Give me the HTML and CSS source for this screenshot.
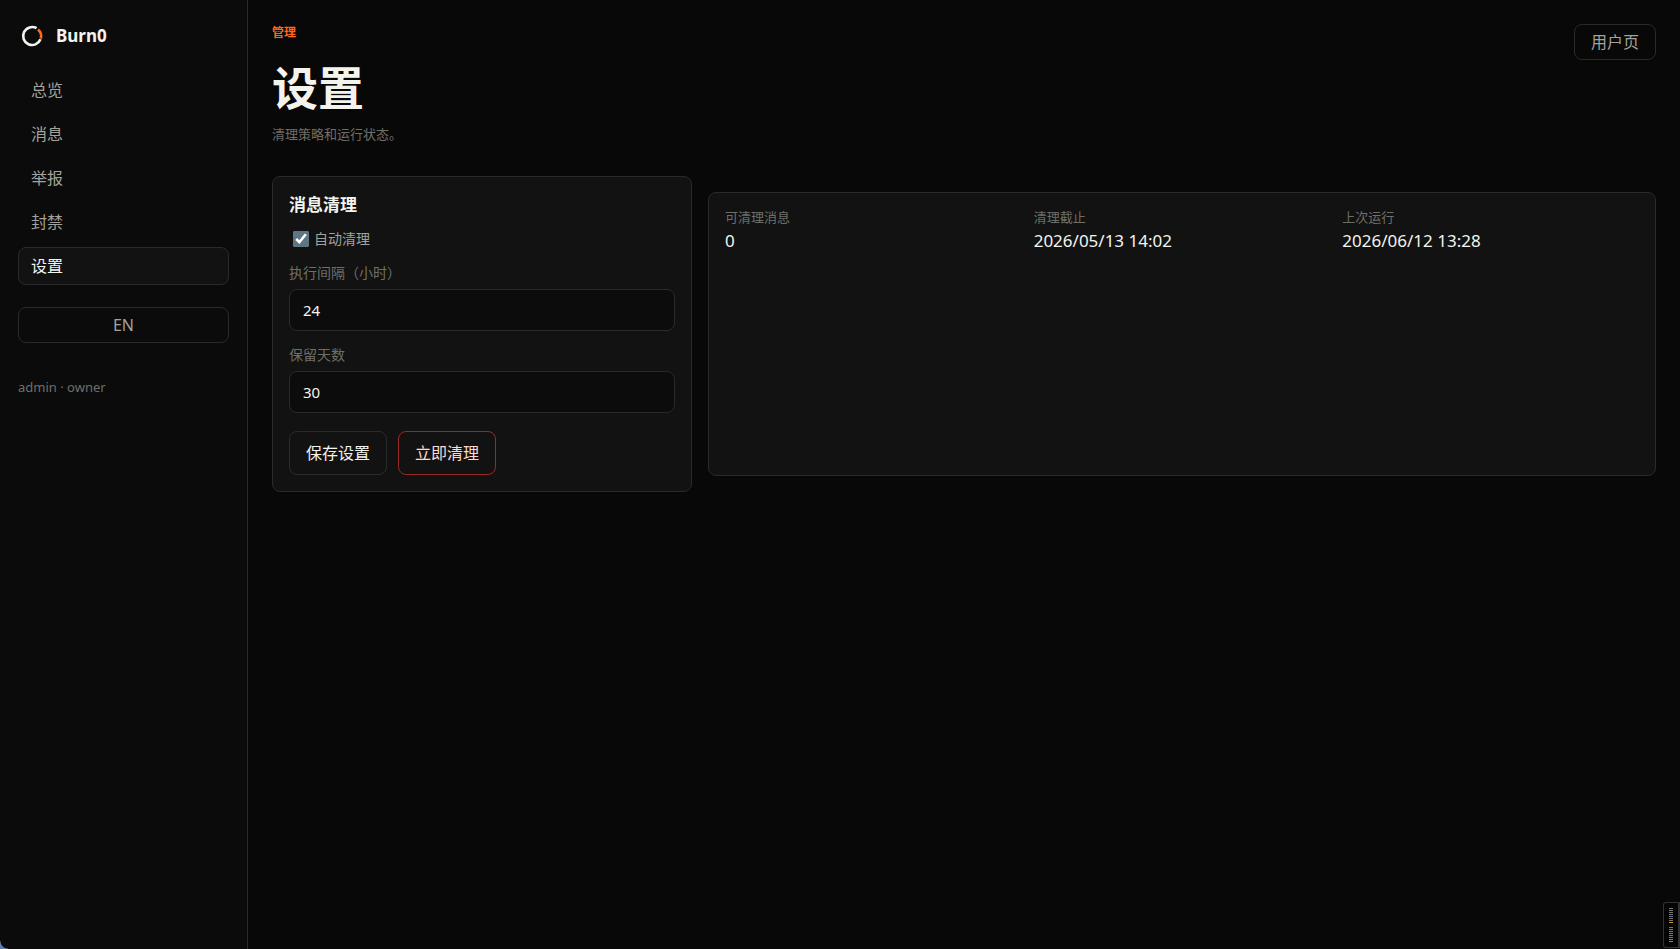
FILE: index.html
```html
<!DOCTYPE html>
<html lang="zh-CN">
<head>
<meta charset="utf-8">
<meta name="viewport" content="width=device-width, initial-scale=1">
<title>Burn0</title>
<link rel="stylesheet" href="styles.css">
</head>
<body>
<div class="shell">
  <aside class="sidebar">
    <a class="brand" href="#">
      <svg class="brand-mark" viewBox="0 0 28 28" fill="none" stroke-width="2.6" aria-hidden="true">
        <path d="M18.6 6.2A9 9 0 1 0 22.5 17.3" stroke="#f4f4ef"/>
        <path d="M20 7.4A9 9 0 0 1 22.8 16.6" stroke="#ff6a1a"/>
      </svg>
      <span>Burn0</span>
    </a>
    <nav class="nav">
      <a class="nav-link" href="#">总览</a>
      <a class="nav-link" href="#">消息</a>
      <a class="nav-link" href="#">举报</a>
      <a class="nav-link" href="#">封禁</a>
      <a class="nav-link active" href="#" aria-current="page">设置</a>
    </nav>
    <button class="ghost" type="button">EN</button>
    <p class="account">admin · owner</p>
  </aside>
  <main class="main">
    <header class="page-head">
      <div>
        <p class="eyebrow">管理</p>
        <h1 class="title">设置</h1>
        <p class="lead">清理策略和运行状态。</p>
      </div>
      <a class="ghost" href="#">用户页</a>
    </header>
    <div class="panels">
      <form class="card form">
        <h2 class="card-title">消息清理</h2>
        <label class="check"><input class="check-box" type="checkbox" checked><span>自动清理</span></label>
        <div class="field">
          <label class="field-label" for="interval">执行间隔（小时）</label>
          <input class="field-input" id="interval" type="text" inputmode="numeric" value="24">
        </div>
        <div class="field">
          <label class="field-label" for="days">保留天数</label>
          <input class="field-input" id="days" type="text" inputmode="numeric" value="30">
        </div>
        <div class="actions">
          <button class="button" type="button">保存设置</button>
          <button class="button danger" type="button">立即清理</button>
        </div>
      </form>
      <dl class="card stats">
        <div><dt class="stat-label">可清理消息</dt><dd class="stat-value">0</dd></div>
        <div><dt class="stat-label">清理截止</dt><dd class="stat-value">2026/05/13 14:02</dd></div>
        <div><dt class="stat-label">上次运行</dt><dd class="stat-value">2026/06/12 13:28</dd></div>
      </dl>
    </div>
  </main>
</div>
<div class="corner" aria-hidden="true"></div>
<div class="meter" aria-hidden="true">
  <div class="meter-bar amber"></div>
  <div class="meter-bar green"></div>
</div>
</body>
</html>
```

FILE: styles.css
```css
* { box-sizing: border-box; }

body {
  margin: 0;
  background: #080808;
  color: #f4f4ef;
  font: 16px/24px "Noto Sans", "Noto Sans CJK SC", sans-serif;
}

a { color: inherit; text-decoration: none; }
p, h1, h2, dl, dd { margin: 0; }
button, input { font: inherit; color: inherit; }

.shell {
  display: grid;
  grid-template-columns: 248px minmax(0, 1fr);
  min-height: 100vh;
}

.sidebar {
  display: flex;
  flex-direction: column;
  padding: 18px;
  background: #0b0b0b;
  border-right: 1px solid #2a2a2a;
}

.brand {
  display: flex;
  align-items: center;
  gap: 10px;
  height: 36px;
  margin-bottom: 17px;
  font-size: 17px;
  font-weight: 700;
}
.brand-mark { width: 28px; height: 28px; }

.nav { display: grid; gap: 6px; margin-bottom: 22px; }
.nav-link {
  padding: 6px 12px;
  border: 1px solid transparent;
  border-radius: 8px;
  color: #a3a39b;
}
.nav-link.active {
  background: #121212;
  border-color: #2a2a2a;
  color: #f4f4ef;
}

.ghost {
  padding: 5px 16px;
  border: 1px solid #2a2a2a;
  border-radius: 8px;
  background: transparent;
  color: #a3a39b;
  text-align: center;
}

.account { margin-top: 34px; color: #6f6f68; font-size: 13px; line-height: 20px; }

.main { padding: 24px; }

.page-head {
  display: flex;
  justify-content: space-between;
  align-items: flex-start;
  margin-bottom: 32px;
}
.eyebrow { color: #ff6a1a; font-size: 12px; line-height: 18px; font-weight: 700; }
.title { margin: 15px 0 7px; font-size: 46px; line-height: 60px; font-weight: 700; }
.lead { color: #6f6f68; font-size: 13px; line-height: 20px; }

.panels {
  display: grid;
  grid-template-columns: 420px minmax(0, 1fr);
  gap: 16px;
}
.card {
  padding: 16px;
  background: #121212;
  border: 1px solid #2a2a2a;
  border-radius: 8px;
}

.form { display: flex; flex-direction: column; }
.card-title { font-size: 17px; line-height: 24px; }
.check {
  display: flex;
  align-items: center;
  gap: 5px;
  margin: 12px 0 14px;
  color: #a3a39b;
  font-size: 14px;
  line-height: 20px;
}
.check-box { width: 16px; height: 16px; margin: 0 0 0 4px; accent-color: #607583; }

.field { display: flex; flex-direction: column; gap: 6px; margin-bottom: 14px; }
.field-label { color: #6f6f68; font-size: 14px; line-height: 20px; }
.field-input {
  width: 100%;
  height: 42px;
  padding: 0 13px;
  border: 1px solid #2a2a2a;
  border-radius: 8px;
  background: #0c0c0c;
  font-size: 15px;
}

.actions { display: flex; gap: 11px; margin-top: 4px; }
.button {
  height: 44px;
  padding: 0 16px;
  border: 1px solid #2a2a2a;
  border-radius: 8px;
  background: transparent;
}
.button.danger { border-color: #9b2828; color: #ffd9d4; }

.stats {
  display: grid;
  grid-template-columns: repeat(3, minmax(0, 1fr));
  gap: 12px;
  margin: 16px 0;
}
.stat-label { color: #6f6f68; font-size: 13px; line-height: 16px; }
.stat-value { margin-top: 4px; font-size: 17px; }

.corner {
  position: fixed;
  left: 0;
  bottom: 0;
  width: 8px;
  height: 8px;
  background: radial-gradient(circle at top right, transparent 7px, #5d7fae 8px);
}

.meter {
  position: fixed;
  right: 0;
  bottom: 1px;
  display: grid;
  gap: 4px;
  width: 17px;
  padding: 5px;
  border: 1px solid #333;
  border-right-width: 2px;
  border-radius: 3px 0 0 3px;
  background: #050505;
}
.meter-bar {
  width: 4px;
  height: 15px;
  background: repeating-linear-gradient(#777 0 1px, transparent 1px 2px);
  border-bottom: 1px solid;
}
.amber { border-color: #e08a10; }
.green { border-color: #62b01e; }
```
